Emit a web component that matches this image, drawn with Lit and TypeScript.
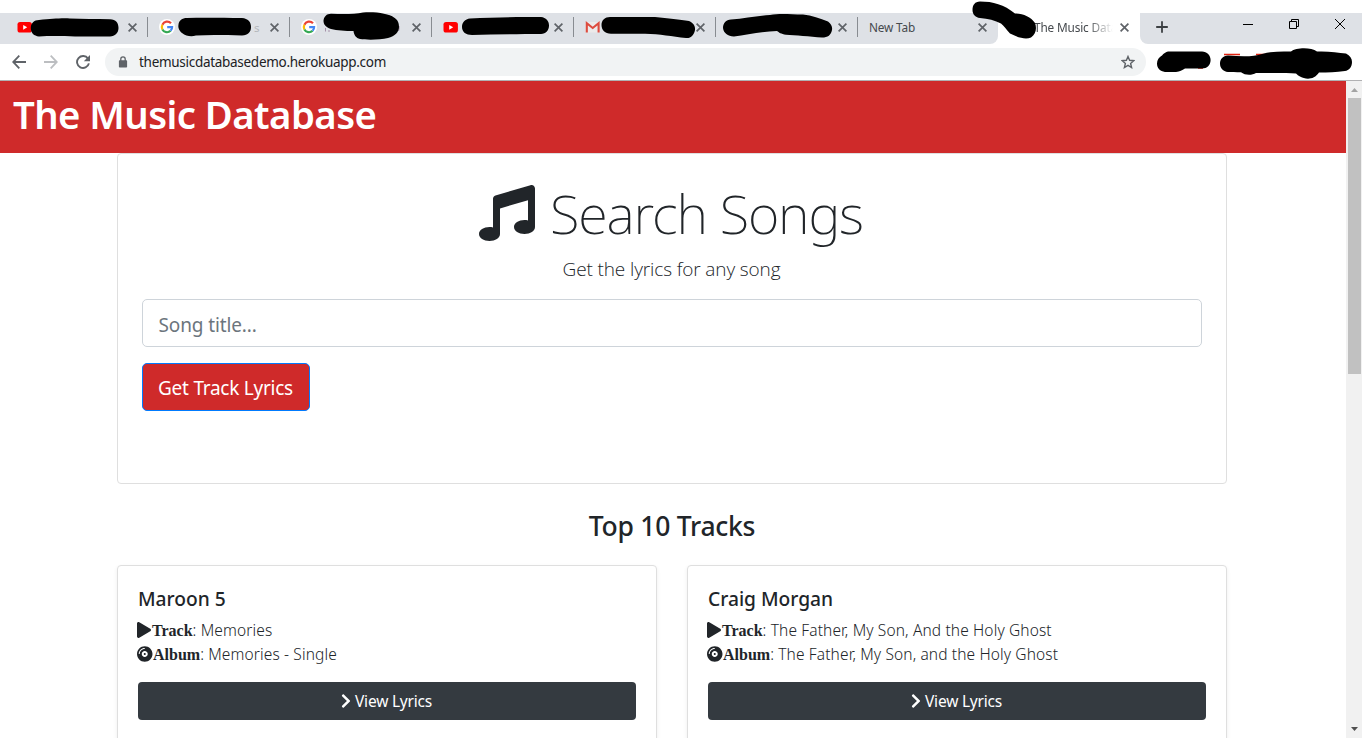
import { LitElement, html, css, svg, nothing } from "lit";
import { customElement, property } from "lit/decorators.js";

type Favicon = "youtube" | "google" | "gmail" | "none";

interface Tab {
  icon: Favicon;
  title: string;
}

interface Track {
  artist: string;
  track: string;
  album: string;
}

const TABS: Tab[] = [
  { icon: "youtube", title: "" },
  { icon: "google", title: "" },
  { icon: "google", title: "" },
  { icon: "youtube", title: "" },
  { icon: "gmail", title: "" },
  { icon: "none", title: "" },
  { icon: "none", title: "New Tab" },
];

const TRACKS: Track[] = [
  { artist: "Maroon 5", track: "Memories", album: "Memories - Single" },
  {
    artist: "Craig Morgan",
    track: "The Father, My Son, And the Holy Ghost",
    album: "The Father, My Son, and the Holy Ghost",
  },
];

const closeIcon = html`<svg width="9" height="9" viewBox="0 0 9 9">
  <path d="M.6 .6 8.400 8.400M8.400 .6 .6 8.400" stroke="#5f6368" stroke-width="1.7" fill="none" />
</svg>`;

const favicons = {
  youtube: html`<svg width="15" height="16" viewBox="0 0 15 16">
    <rect x="0.5" y="3" width="14.4" height="10.6" rx="2.6" fill="#f00" />
    <path d="M6.2 5.9v4.8l4-2.4z" fill="#fff" />
  </svg>`,
  google: html`<svg width="16" height="16" viewBox="0 0 16 16">
    <circle cx="8" cy="8" r="8" fill="#fff" />
    <g fill="none" stroke-width="2.2">
      <path d="M12 4.3A5.2 5.2 0 0 0 3.4 5.7" stroke="#ea4335" />
      <path d="M3.4 5.7a5.2 5.2 0 0 0 0 4.7" stroke="#fbbc05" />
      <path d="M3.4 10.4A5.2 5.2 0 0 0 11.6 11.8" stroke="#34a853" />
      <path d="M11.6 11.8A5 5 0 0 0 13.1 8.1H8.2" stroke="#4285f4" />
    </g>
  </svg>`,
  gmail: html`<svg width="15" height="16" viewBox="0 0 15 16">
    <rect x="0.5" y="3" width="14" height="10.6" rx="1" fill="#eceaea" />
    <path d="M1.8 13.6V4.2L7.7 9l5.9-4.8v9.4" fill="none" stroke="#dd4b3e" stroke-width="2.1" />
  </svg>`,
  none: nothing,
};

@customElement("browser-tabs")
export class BrowserTabs extends LitElement {
  static styles = css`
    :host {
      display: flex;
      height: 31px;
      margin-top: 13px;
      background: #fff;
      font-family: "Noto Sans", sans-serif;
      font-size: 11.8px;
      letter-spacing: -0.15px;
      color: #45494d;
    }
    svg {
      display: block;
    }
    .inactive {
      display: flex;
      width: 998px;
      box-sizing: border-box;
      padding-left: 6px;
      background: #dee1e6;
      border-bottom-right-radius: 8px;
    }
    .tab {
      flex: 0 0 142px;
      box-sizing: border-box;
      display: flex;
      align-items: center;
      padding: 0 11.5px 3px 11px;
    }
    .tab:last-child {
      flex-basis: 140px;
      padding-right: 11px;
    }
    .divided {
      background: linear-gradient(#888c91, #888c91) right 4px / 1px 20px no-repeat;
    }
    .title {
      flex: 1;
      line-height: 20px;
      white-space: nowrap;
      overflow: hidden;
    }
    .active {
      width: 142px;
      box-sizing: border-box;
      display: flex;
      align-items: center;
      padding: 0 11.5px 3px 36px;
      border-top-right-radius: 8px;
    }
    .active .title {
      margin-right: 7px;
      mask-image: linear-gradient(90deg, #000 68%, transparent);
      -webkit-mask-image: linear-gradient(90deg, #000 68%, transparent);
    }
    .rest {
      flex: 1;
      display: flex;
      justify-content: space-between;
      padding: 0 16px 0 16px;
      background: #dee1e6;
      border-bottom-left-radius: 8px;
    }
    .plus {
      margin-top: 8px;
    }
    .window {
      display: flex;
      gap: 35px;
      padding-top: 5px;
    }
  `;

  render() {
    return html`
      <div class="inactive">
        ${TABS.map(
          (t, i) => html`<div class="tab ${i < TABS.length - 1 ? "divided" : ""}">
            ${favicons[t.icon]}<span class="title">${t.title}</span>${closeIcon}
          </div>`
        )}
      </div>
      <div class="active"><span class="title">The Music Database</span>${closeIcon}</div>
      <div class="rest">
        <svg class="plus" width="12" height="12" viewBox="0 0 12 12">
          <path d="M6 .2v11.6M.2 6h11.6" stroke="#3c4043" stroke-width="1.8" />
        </svg>
        <div class="window">
          <svg width="11" height="12" viewBox="0 0 11 12">
            <path d="M0 6.500h10" stroke="#000" />
          </svg>
          <svg width="11" height="12" viewBox="0 0 11 12">
            <path d="M.5 3.500h7v7h-7zM2.500 3.500v-2h7v7h-2" fill="none" stroke="#000" />
          </svg>
          <svg width="11" height="12" viewBox="0 0 11 12">
            <path d="M0 1 10 11M10 1 0 11" fill="none" stroke="#000" />
          </svg>
        </div>
      </div>
    `;
  }
}

@customElement("browser-toolbar")
export class BrowserToolbar extends LitElement {
  static styles = css`
    :host {
      display: flex;
      align-items: center;
      height: 36px;
      padding: 0 0 0 12px;
      border-bottom: 1px solid #b1b1b3;
      background: #fff;
      font-family: "Noto Sans", sans-serif;
    }
    svg {
      display: block;
    }
    .nav {
      display: flex;
      gap: 18px;
      width: 93px;
    }
    .address {
      display: flex;
      align-items: center;
      box-sizing: border-box;
      width: 1041px;
      height: 28px;
      padding: 0 11px 0 13px;
      border-radius: 14px;
      background: #f1f3f4;
    }
    .url {
      flex: 1;
      margin-left: 11px;
      font-size: 13.5px;
      letter-spacing: -0.29px;
      line-height: 26px;
      color: #202124;
    }
  `;

  render() {
    return html`
      <div class="nav">
        <svg width="14" height="14" viewBox="0 0 14 14">
          <path d="M14 7H1.4M7.3 .7 1.2 7l6.1 6.3" fill="none" stroke="#5f6368" stroke-width="1.8" />
        </svg>
        <svg width="14" height="14" viewBox="0 0 14 14">
          <path d="M0 7h12.6M6.7 .7 12.8 7l-6.1 6.3" fill="none" stroke="#bcbec1" stroke-width="1.8" />
        </svg>
        <svg width="14" height="14" viewBox="0 0 14 14">
          <path d="M12 3.6A6 6 0 1 0 12.9 8.4" fill="none" stroke="#5f6368" stroke-width="1.9" />
          <path d="M14 0v6.2H7.8z" fill="#5f6368" />
        </svg>
      </div>
      <div class="address">
        <svg width="10" height="12" viewBox="0 0 10 12">
          <rect x="0.9" y="4.2" width="8.2" height="7.4" rx="0.8" fill="#5f6368" />
          <path d="M2.8 5V3a2.2 2.2 0 0 1 4.4 0v2" fill="none" stroke="#5f6368" stroke-width="1.3" />
        </svg>
        <span class="url">themusicdatabasedemo.herokuapp.com</span>
        <svg width="14" height="14" viewBox="0 0 14 14">
          <path
            d="M7 1.5 8.6 5.3 12.8 5.7 9.6 8.4 10.6 12.5 7 10.3 3.4 12.5 4.4 8.4 1.2 5.7 5.4 5.3z"
            fill="none"
            stroke="#5f6368"
            stroke-width="1.4"
          />
        </svg>
      </div>
    `;
  }
}

@customElement("track-card")
export class TrackCard extends LitElement {
  @property({ attribute: false }) item!: Track;

  static styles = css`
    :host {
      box-sizing: border-box;
      display: block;
      width: 540px;
      height: 206px;
      padding: 20px;
      border: 1px solid #dfdfdf;
      border-radius: 4px;
      background: #fff;
      box-shadow: 0 2px 4px rgba(0, 0, 0, 0.075);
    }
    .artist {
      margin: 0 0 7px;
      font: 500 19.2px/25px "Noto Sans", sans-serif;
      letter-spacing: 0;
    }
    .line {
      display: flex;
      align-items: baseline;
      height: 24px;
      font: 300 15.5px/25px "Noto Sans", sans-serif;
      letter-spacing: 0.13px;
      white-space: pre;
    }
    .line svg {
      align-self: center;
      margin-left: -1px;
    }
    .label {
      font: bold 16px/24px "Liberation Serif", serif;
      letter-spacing: 0;
    }
    .view {
      display: flex;
      align-items: center;
      justify-content: center;
      gap: 4px;
      box-sizing: border-box;
      height: 38px;
      margin-top: 16px;
      padding-right: 1px;
      border-radius: 4px;
      background: #343a40;
      color: #fff;
      font: 400 15.5px/24px "Noto Sans", sans-serif;
      letter-spacing: -0.21px;
    }
  `;

  render() {
    return html`
      <h5 class="artist">${this.item.artist}</h5>
      <div class="line"><svg width="15" height="16" viewBox="0 0 480 512" fill="#212529"><path d="M424.4 214.7L72.4 6.6C43.8-10.3 0 6.1 0 47.9V464c0 37.5 40.7 60.1 72.4 41.3l352-208c31.4-18.5 31.5-64.1 0-82.6z" /></svg><span class="label">Track</span><span>: ${this.item.track}</span></div>
      <div class="line"><svg width="16" height="16" viewBox="0 0 512 512" fill="#212529"><path d="M248 8C111 8 0 119 0 256s111 248 248 248 248-111 248-248S385 8 248 8zM88 256H56c0-105.9 86.1-192 192-192v32c-88.2 0-160 71.8-160 160zm160 96c-53 0-96-43-96-96s43-96 96-96 96 43 96 96-43 96-96 96zm0-128c-17.7 0-32 14.3-32 32s14.3 32 32 32 32-14.3 32-32-14.3-32-32-32z" /></svg><span class="label">Album</span><span>: ${this.item.album}</span></div>
      <div class="view">
        <svg width="10" height="16" viewBox="0 0 320 512" fill="#fff">
          <path d="M285.476 272.971L91.132 467.314c-9.373 9.373-24.569 9.373-33.941 0l-22.667-22.667c-9.357-9.357-9.375-24.522-.04-33.901L188.505 256 34.484 101.255c-9.335-9.379-9.317-24.544.04-33.901l22.667-22.667c9.373-9.373 24.569-9.373 33.941 0L285.475 239.03c9.373 9.372 9.373 24.568.001 33.941z" />
        </svg>
        <span>View Lyrics</span>
      </div>
    `;
  }
}

// Marker strokes lying over the tab titles and the extension buttons.
const MARKS = [
  "M39 20C52 19 60 18 70 18.5C82 19 96 19 110 19.3C116 19.6 118.5 23 118.5 28C118.5 33 115 36.3 110 36.5H75C62 36 50 36 39 36.4C34 36 30.8 33 30.8 28C30.8 23.5 34 20 39 20Z",
  "M187 18C205 17.5 225 18 242 18C248 18.5 251 22 251 27C251 32 248 35.3 242 35.5C225 35 210 34.5 196 35.5C191 37.3 186 36 182 33C178.5 30 178 27 178.5 24.5C179 20.5 182 18 187 18Z",
  "M331 13.7C345 14.5 355 14 363 12.5C375 11.5 389 13.5 394 17.5C398 20 399 23 399 27C399 32 395 36 388 38C380 40 366 40 360 39C356 38 354 35 353.5 31C345 31 337 30.5 331 29C325 27 323.5 24 323.5 20.5C324 16.5 326.5 13.7 331 13.7Z",
  "M470 18.5C495 17 520 17 541 17C546 17.5 549 21 549 25.5C549 30.5 546 33.5 541 34C520 34 495 34.5 472 35C466 35 462 32 462 27C462 22.5 465 19 470 18.5Z",
  "M610 17H655C668 18.5 680 19.5 689 21C693.5 23 695.5 26 695 30C694 35 691 38.5 686 38C672 36.5 660 34 645 33.7H611C605 33.5 601.5 30 601.5 25C601.5 20 605 17 610 17Z",
  "M731 19.5C745 18.5 757 16 770 15C780 13 790 14.3 803 14.6C812 15.5 820 18.5 828 21.5C831.5 24 832.5 27 832 30C831 35 828 37.5 822 37.5C810 36.5 795 35 786 34.7C781 34 779 32.5 777 31C762 31.5 747 35 734 36.4C728 36.5 723.5 33 723 28C723 23 726 20 731 19.5Z",
  "M980 1.5C993 1.5 1004 4.5 1015 13.5C1023 13.5 1031 17 1035 23C1037 28 1036 34 1031 37.5C1025 40 1017 37 1010 33.5C1006 29 1004 26 1001 23.5C995 20.5 988 18.5 980 18C975 17.5 972.5 14 972.5 10C972.5 5 975 1.5 980 1.5Z",
  "M1168 51.5H1202C1207 52 1210.6 55 1210.6 60C1210.6 65 1207 68.5 1202 68.5H1185C1182 70.5 1180 71.7 1176 71.9H1165C1160 71.5 1157 68 1157 63.5C1157 60 1159 57 1162 55.5C1163.5 53.5 1166 52 1168 51.5Z",
  "M1228 55.5C1240 56.5 1254 57 1262 54C1271 51 1282 51.5 1291 51.5C1296 47.5 1311 47 1317 51.5C1328 51 1338 52.5 1346 53.5C1350 55.5 1352 58.5 1352 62C1352 67 1349 70.5 1345 71C1336 72.3 1328 72.5 1319 72.5C1316 77 1312 78.7 1308 78.7C1302 78.5 1298 75.5 1296 73.5C1284 72.5 1268 73 1256 73C1252 75.5 1245 75.5 1241 72.3C1236 72 1231 72 1228 72C1223 71.5 1220 68 1220 63.5C1220 59 1223 55.8 1228 55.5Z",
];

@customElement("app-root")
export class AppRoot extends LitElement {
  static styles = css`
    :host {
      display: block;
      position: relative;
      width: 1362px;
      height: 738px;
      overflow: hidden;
      background: #fff;
      color: #212529;
      font-family: "Open Sans", sans-serif;
    }
    .marks {
      position: absolute;
      top: 0;
      left: 0;
      pointer-events: none;
    }
    .hint {
      font: 11.6px "Noto Sans", sans-serif;
    }
    .viewport {
      display: flex;
      height: 657px;
    }
    .page {
      width: 1346px;
      overflow: hidden;
    }
    .header {
      box-sizing: border-box;
      height: 72px;
      padding: 2.5px 0 0 13px;
      background: #cf2a2a;
      color: #fff;
    }
    .brand {
      margin: 0;
      font: 600 38.3px/60px "Noto Sans", sans-serif;
      letter-spacing: -0.57px;
    }
    .container {
      width: 1110px;
      margin-left: 117px;
    }
    .search {
      box-sizing: border-box;
      height: 331px;
      padding: 25.5px 24px 0;
      border: 1px solid #dfdfdf;
      border-radius: 4px;
    }
    .title {
      display: flex;
      align-items: center;
      justify-content: center;
      gap: 15px;
      height: 67px;
      margin: 0;
      padding-right: 2px;
      font: 200 54px/67px "Noto Sans", sans-serif;
      letter-spacing: -1.15px;
    }
    .lead {
      margin: 7.5px 0 15px;
      padding-right: 1px;
      text-align: center;
      font: 300 19px/30px "Open Sans", sans-serif;
      letter-spacing: -0.12px;
    }
    .field {
      box-sizing: border-box;
      height: 48px;
      padding: 4px 15.5px 0;
      border: 1px solid #ced4da;
      border-radius: 5px;
      color: #6c757d;
      font: 400 19px/43px "Noto Sans", sans-serif;
      letter-spacing: -0.12px;
    }
    .submit {
      box-sizing: border-box;
      width: 168px;
      height: 48px;
      margin-top: 16px;
      padding: 2px 1px 0 0;
      border: 1px solid #007bff;
      border-radius: 5px;
      background: #cf2a2a;
      color: #fff;
      text-align: center;
      font: 400 19px/45px "Noto Sans", sans-serif;
      letter-spacing: -0.25px;
    }
    .heading {
      margin: 0;
      padding: 25px 0 22px;
      text-align: center;
      font: 500 26.5px/34px "Noto Sans", sans-serif;
      letter-spacing: -0.27px;
    }
    .cards {
      display: flex;
      gap: 30px;
    }
    .scrollbar {
      box-sizing: border-box;
      width: 16px;
      display: flex;
      flex-direction: column;
      justify-content: space-between;
      padding: 7px 1px 7px 2px;
      background: #f1f1f1;
    }
    .thumb {
      width: 13px;
      height: 276px;
      margin-top: 6px;
      background: #c1c1c1;
    }
    .scrollbar svg {
      display: block;
      margin-left: 3px;
    }
  `;

  render() {
    return html`
      <browser-tabs></browser-tabs>
      <browser-toolbar></browser-toolbar>
      <div class="viewport">
        <div class="page">
          <div class="header"><h1 class="brand">The Music Database</h1></div>
          <div class="container">
            <div class="search">
              <h1 class="title">
                <svg width="56" height="56" viewBox="0 0 512 512" fill="#212529">
                  <path d="M511.99 32.01c0-21.71-21.1-37.01-41.6-30.51L150.4 96c-13.3 4.2-22.4 16.5-22.4 30.5v261.42c-10.05-2.38-20.72-3.92-32-3.92-53.02 0-96 28.65-96 64s42.98 64 96 64 96-28.65 96-64V214.31l256-75.02v184.63c-10.05-2.38-20.72-3.92-32-3.92-53.02 0-96 28.65-96 64s42.98 64 96 64 96-28.65 96-64l-.01-351.99z" />
                </svg>
                <span>Search Songs</span>
              </h1>
              <p class="lead">Get the lyrics for any song</p>
              <div class="field">Song title...</div>
              <div class="submit">Get Track Lyrics</div>
            </div>
            <h3 class="heading">Top 10 Tracks</h3>
            <div class="cards">
              ${TRACKS.map((t) => html`<track-card .item=${t}></track-card>`)}
            </div>
          </div>
        </div>
        <div class="scrollbar">
          <div>
            <svg width="7" height="4" viewBox="0 0 7 4"><path d="M0 4 3.5 0 7 4z" fill="#a3a3a3" /></svg>
            <div class="thumb"></div>
          </div>
          <svg width="7" height="4" viewBox="0 0 7 4"><path d="M0 0h7L3.5 4z" fill="#505050" /></svg>
        </div>
      </div>
      <svg class="marks" width="1362" height="80" viewBox="0 0 1362 80">
        <path d="M1224 54.5h16M1256 54.5h12M1198 68h5" stroke="#e0220f" stroke-width="1.5" />
        <path d="M325.5 28v3.5M328 31h2M398.5 31q1-2 .5-5" stroke="#a58fa8" fill="none" />
        <text class="hint" x="254" y="31.5" fill="#b4b7bb">s</text>
        ${MARKS.map((d) => svg`<path d=${d} />`)}
      </svg>
    `;
  }
}
